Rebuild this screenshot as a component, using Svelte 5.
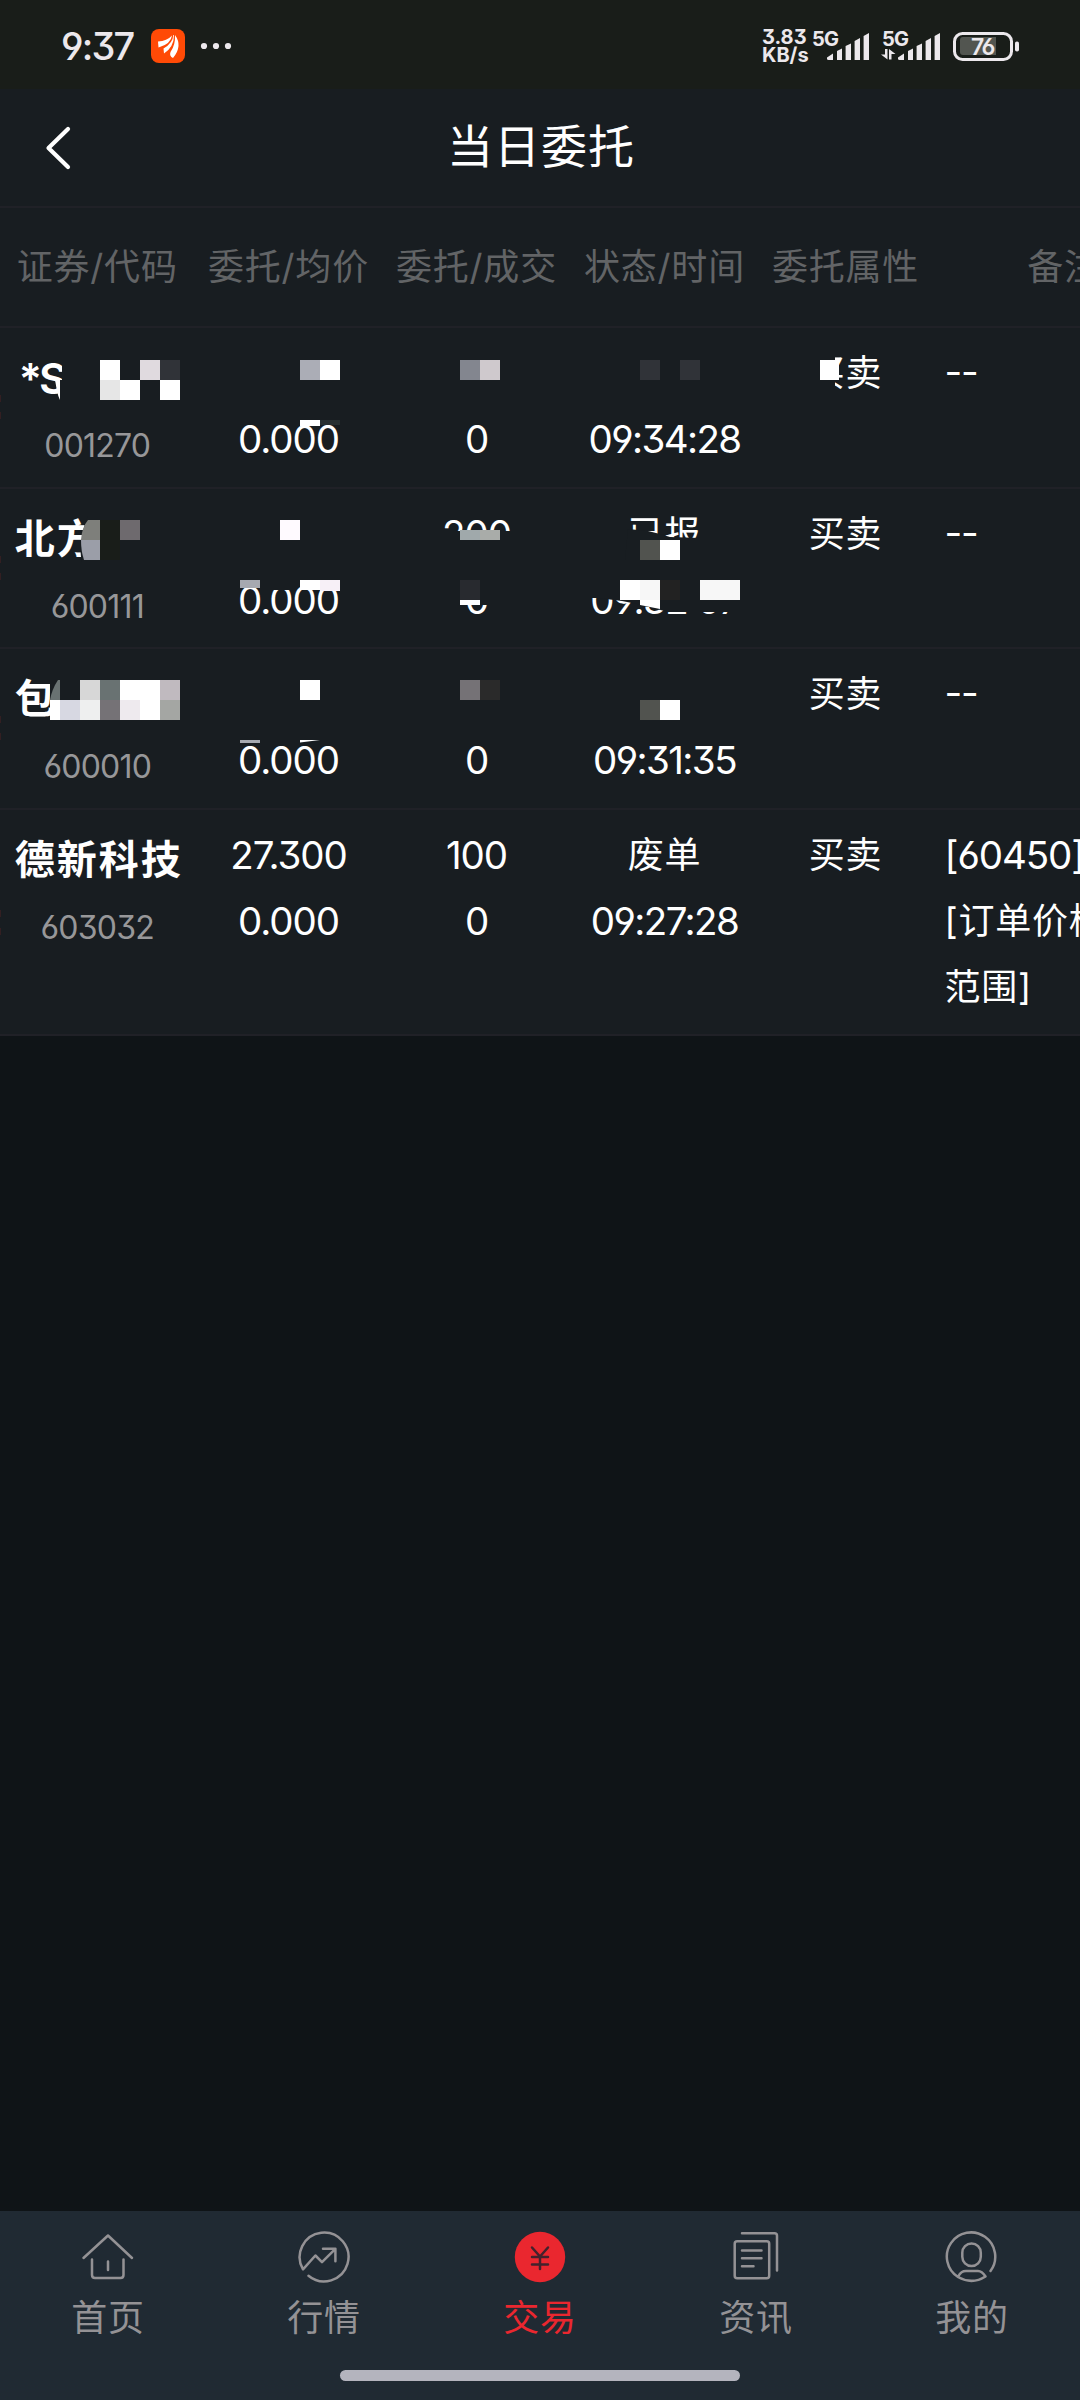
<script lang="ts">
	type Order = {
		name: string;
		code: string;
		price: string[];
		amount: string[];
		status: string;
		time: string;
		remark: string[];
	};

	const columns = ['证券/代码', '委托/均价', '委托/成交', '状态/时间', '委托属性', '备注'];

	const orders: Order[] = [
		{ name: '*S', code: '001270', price: ['', '0.000'], amount: ['', '0'], status: '', time: '09:34:28', remark: ['--'] },
		{ name: '北方', code: '600111', price: ['', '0.000'], amount: ['200', '0'], status: '已报', time: '09:32:07', remark: ['--'] },
		{ name: '包', code: '600010', price: ['', '0.000'], amount: ['', '0'], status: '', time: '09:31:35', remark: ['--'] },
		{
			name: '德新科技',
			code: '603032',
			price: ['27.300', '0.000'],
			amount: ['100', '0'],
			status: '废单',
			time: '09:27:28',
			remark: ['[60450]', '[订单价格', '范围]']
		}
	];

	// redaction blocks: x, y, width, height, colour
	const blocks: [number, number, number, number, string][] = [
		[100, 360, 20, 20, '#fff'],
		[140, 360, 20, 20, '#e0dadf'],
		[160, 360, 20, 20, '#303338'],
		[100, 380, 20, 20, '#e6e6e6'],
		[120, 380, 20, 20, '#fff'],
		[160, 380, 20, 20, '#fff'],
		[300, 360, 20, 20, '#abadb6'],
		[320, 360, 20, 20, '#fff'],
		[460, 360, 20, 20, '#83868f'],
		[480, 360, 20, 20, '#cfc9cd'],
		[640, 360, 20, 20, '#303338'],
		[680, 360, 20, 20, '#303338'],
		[820, 360, 19, 20, '#fff'],
		[300, 420, 20, 6, '#fff'],
		[320, 420, 20, 5, '#283032'],
		[100, 520, 20, 40, '#191d19'],
		[120, 520, 20, 20, '#6e6a6e'],
		[280, 520, 20, 20, '#fffaff'],
		[460, 530, 20, 10, '#a0a9ab'],
		[480, 530, 20, 10, '#a9aca9'],
		[640, 540, 20, 20, '#51534f'],
		[660, 540, 20, 20, '#fff'],
		[240, 580, 20, 8, '#a6a9b0'],
		[300, 580, 20, 10, '#fff'],
		[320, 580, 20, 11, '#f7f0f7'],
		[460, 580, 20, 20, '#282a2f'],
		[460, 600, 20, 5, '#fff'],
		[620, 580, 20, 20, '#fff'],
		[640, 580, 20, 20, '#f7f7f7'],
		[660, 580, 20, 20, '#222'],
		[700, 580, 40, 20, '#f7f7f7'],
		[80, 680, 20, 20, '#d7d7d7'],
		[100, 680, 20, 20, '#697272'],
		[120, 680, 40, 20, '#fff'],
		[160, 680, 20, 20, '#c0babf'],
		[50, 700, 10, 20, '#fff'],
		[60, 700, 20, 20, '#d7d8e2'],
		[80, 700, 20, 20, '#eeefef'],
		[100, 700, 20, 20, '#757276'],
		[120, 700, 20, 20, '#eeeaee'],
		[140, 700, 20, 20, '#fff'],
		[160, 700, 20, 20, '#a4a6a3'],
		[300, 680, 20, 20, '#fff'],
		[460, 680, 20, 20, '#757276'],
		[480, 680, 20, 20, '#2a2a2a'],
		[640, 700, 20, 20, '#51534f'],
		[660, 700, 20, 20, '#fff'],
		[240, 740, 20, 3, '#a6a9b0']
	];

	const edgeMarks = [395, 412, 556, 573, 716, 733, 910, 928];

	const tabs = [
		{ id: 'home', label: '首页' },
		{ id: 'market', label: '行情' },
		{ id: 'trade', label: '交易' },
		{ id: 'news', label: '资讯' },
		{ id: 'mine', label: '我的' }
	];

	let activeTab = $state('trade');
</script>

{#snippet signal()}
	<svg class="signal" width="43" height="28" viewBox="0 0 43 28" fill="#ece8ec">
		<path d="M0 24.5 6 20.5V27H1.5Q0 27 0 25.5Z" />
		<path d="M10 18 15 15.5V27H10Z" />
		<path d="M18.6 13 24 10.5V27H18.6Z" />
		<path d="M27.6 8 33 5V27H27.6Z" />
		<path d="M36.6 3 42 0V27H36.6Z" />
	</svg>
{/snippet}

<div class="screen">
	<div class="status-bar">
		<span class="clock">9:37</span>
		<svg class="app-logo" width="34" height="34" viewBox="0 0 34 34">
			<rect width="34" height="34" rx="8" fill="#ff4a06" />
			<path d="M7 12.500Q16 12 21 6.500 20 15 7.500 18.500z" fill="#fff" />
			<path d="M22.300 6Q22 14 12.500 19.500L13 24.500Q23 18 23 6z" fill="#fff" />
			<path d="M24 6q8 11-2 23-4-2-2.500-6 5-7 4.500-17z" fill="#fff" />
		</svg>
		<svg class="dots" width="32" height="8" viewBox="0 0 32 8" fill="#ece8ec">
			<circle cx="4" cy="4" r="3.100" />
			<circle cx="16" cy="4" r="3.100" />
			<circle cx="28" cy="4" r="3.100" />
		</svg>
		<div class="speed"><span>3.83</span><span>KB/s</span></div>
		<div class="network first"><span>5G</span>{@render signal()}</div>
		<div class="network second">
			<span>5G</span>
			<svg class="arrows" width="15" height="11" viewBox="0 0 15 11" fill="#ece8ec">
				<path d="M4 0h2.500v10.500L0 5.500h4z" />
				<path d="M8 10.500V0l6.500 5h-4v5.500z" />
			</svg>
			{@render signal()}
		</div>
		<div class="battery">
			<svg width="67" height="29" viewBox="0 0 67 29">
				<rect x="1.500" y="1.500" width="57" height="26" rx="8" fill="none" stroke="#ece8ec" stroke-width="3" />
				<path d="M10 5h33v18H10q-3 0-3-3V8q0-3 3-3z" fill="#525550" />
				<rect x="62" y="9.500" width="4" height="10" rx="1.800" fill="#ece8ec" />
			</svg>
			<span>76</span>
		</div>
	</div>

	<header>
		<button class="back" aria-label="返回">
			<svg width="30" height="46" viewBox="0 0 30 46" fill="none" stroke="#fff" stroke-width="4.200" stroke-linecap="round" stroke-linejoin="round">
				<path d="M25 4 5.500 23 25 42" />
			</svg>
		</button>
		<h1>当日委托</h1>
	</header>

	<div class="table">
		<div class="row head">
			{#each columns as column}
				<div class="cell">{column}</div>
			{/each}
		</div>
		{#each orders as order (order.code)}
			<div class="row">
				<div class="cell stock">
					<b class:starred={order.name.startsWith('*')}>{order.name}</b>
					<small>{order.code}</small>
				</div>
				<div class="cell">
					{#each order.price as value}<span class="num">{value}</span>{/each}
				</div>
				<div class="cell">
					{#each order.amount as value}<span class="num">{value}</span>{/each}
				</div>
				<div class="cell">
					<span>{order.status}</span>
					<span class="num time">{order.time}</span>
				</div>
				<div class="cell"><span>买卖</span></div>
				<div class="cell remark">
					{#each order.remark as line, i}
						<span class:num={i === 0} class:none={line === '--'}>{line}</span>
					{/each}
				</div>
			</div>
		{/each}

		<svg class="redaction" width="1080" height="708" viewBox="0 328 1080 708" aria-hidden="true">
			<g fill="#181d21">
				<path d="M60 380h15v22H60zM62 355h13v30H62zM806 350h29v44h-29z" />
				<path d="M88 516h20v46H82q-3-12 0-24 2-14 6-22z" />
				<path d="M440 531h80v24h-80zM460 580h32v25h-32z" />
				<path d="M628 529l20 2 12 3 10 3 30 1v22h-75z" />
				<path d="M588 582h156v30h-42v4h-14v-4h-20l-26-7-20-4-24-3h-10z" />
				<path d="M270 585h20v5h-20zM50 676h20v44H50z" />
			</g>
			{#each blocks as [x, y, width, height, fill]}
				<rect {x} {y} {width} {height} {fill} shape-rendering="crispEdges" />
			{/each}
			<path d="M55 380h5v20q-2-4-3-9z" fill="#fff" />
			<path d="M88 520h12v20H81q1-13 7-20z" fill="#7e7f7b" />
			<path d="M81 540h19v20H84q-3-9-3-20z" fill="#9b9ea8" />
			<path d="M640 600h20v9l-20-4z" fill="#fff" />
			<path d="M58 680h2v20H50q2-11 8-20z" fill="#697272" />
			<path d="M300 740h20l-20 2.500z" fill="#fff" />
			{#each edgeMarks as y}
				<rect x="0" {y} width="1" height="7" fill="#331f22" />
			{/each}
		</svg>
	</div>

	<nav>
		<div class="tabs">
			{#each tabs as tab (tab.id)}
				<button class:active={activeTab === tab.id} onclick={() => (activeTab = tab.id)}>
					<svg width="56" height="56" viewBox="0 0 56 56" fill="none" stroke="currentColor" stroke-width="2.500" stroke-linecap="round" stroke-linejoin="round">
						{#if tab.id === 'home'}
							<path d="M3.500 29 28 6.500 52 29" />
							<path d="M12 30.500V46q0 3 3 3h25.500q3 0 3-3V30.500M28 32.500v8.500" />
						{:else if tab.id === 'market'}
							<path d="M12.500 46.800A24.400 24.400 0 1 0 7 40.300L19.400 26.500 26 33.200 39.400 19.800M27 19.800H39.400V32.200" />
						{:else if tab.id === 'trade'}
							<circle cx="28" cy="28" r="25.200" fill="currentColor" stroke="none" />
							<path d="M20 18.500 28 27.500 36 18.500M28 27.500V40M20 28H36M20 35.500H36" stroke="#43222c" />
						{:else if tab.id === 'news'}
							<rect x="6.700" y="12.300" width="34.500" height="37" rx="2.500" />
							<path d="M14 4.300H46.500q2.500 0 2.500 2.500V41.500M14 21.500H33.500M14 29.200H33.500M14 37.200H25.500" />
						{:else}
							<path d="M46.500 42A24.200 24.200 0 1 0 14 48M14 48Q28 56 41.500 47.500M14.500 47Q17 42 22 42H34Q38 42 41.500 47.500" />
							<rect x="18.300" y="14.500" width="18.500" height="22.500" rx="9.250" />
						{/if}
					</svg>
					<span>{tab.label}</span>
				</button>
			{/each}
		</div>
		<div class="home-indicator"></div>
	</nav>
</div>

<style>
	:global(body) {
		background: #0f1417;
	}

	.screen {
		width: 1080px;
		height: 2400px;
		display: flex;
		flex-direction: column;
		overflow: hidden;
		background: #0f1417;
		color: #fff;
		font-family: Inter, 'Noto Sans CJK SC', sans-serif;
		font-feature-settings: 'cv03', 'cv04', 'cv09';
	}

	button {
		padding: 0;
		border: none;
		background: none;
		font: inherit;
		color: inherit;
	}

	svg {
		display: block;
		flex-shrink: 0;
	}

	.status-bar {
		display: flex;
		align-items: center;
		height: 89px;
		padding: 3px 60px 0 61px;
		box-sizing: border-box;
		background: #191d19;
		color: #ece8ec;
	}

	.clock {
		width: 90px;
		font-size: 38px;
		font-weight: 500;
		letter-spacing: -1.8px;
	}

	.dots {
		margin-left: 15px;
	}

	.speed {
		display: flex;
		flex-direction: column;
		width: 51px;
		margin-left: auto;
		font-size: 20px;
		line-height: 18.5px;
		font-weight: 700;
		white-space: nowrap;
	}

	.network {
		position: relative;
		display: flex;
		align-items: flex-end;
		height: 30px;
	}

	.network span {
		position: absolute;
		left: -1px;
		top: -2px;
		font-size: 20px;
		line-height: 20px;
		font-weight: 700;
		letter-spacing: -0.8px;
	}

	.network .signal {
		margin-left: 14px;
	}

	.network.second {
		margin-left: 13px;
	}

	.network .arrows {
		margin: 0 2px 1px -2px;
	}

	.network.second .signal {
		margin-left: 0;
	}

	.battery {
		position: relative;
		margin-left: 12px;
	}

	.battery span {
		position: absolute;
		left: 18px;
		top: 1px;
		font-size: 23px;
		line-height: 28px;
		font-weight: 600;
		letter-spacing: -1.5px;
	}

	header {
		display: grid;
		grid-template-columns: 120px 1fr 120px;
		align-items: center;
		height: 119px;
		box-sizing: border-box;
		border-bottom: 2px solid #202127;
		background: #181d21;
	}

	.back {
		padding-left: 43px;
	}

	h1 {
		margin: 0;
		padding: 0 0 9px 2px;
		font-size: 46px;
		font-weight: 400;
		letter-spacing: 1px;
		text-align: center;
	}

	.table {
		position: relative;
		background: #181d21;
	}

	.row {
		display: grid;
		grid-template-columns: 194.5px 188px 188px 188px 174px 263px;
		min-height: 160.5px;
		padding: 12px 0 14px;
		box-sizing: border-box;
		border-bottom: 2px solid #202127;
	}

	.row.head {
		min-height: 120px;
		padding: 0 0 1px;
		align-items: center;
		color: #626466;
	}

	.cell {
		display: flex;
		flex-direction: column;
		align-items: center;
		font-size: 36px;
		line-height: 66px;
		letter-spacing: 0.8px;
		white-space: nowrap;
	}

	.cell span {
		height: 66px;
	}

	.cell .num {
		font-size: 38.5px;
		line-height: 67px;
		letter-spacing: -1.1px;
	}

	.cell .time {
		letter-spacing: -1.6px;
	}

	.cell .none {
		line-height: 63px;
	}

	.stock b {
		width: 165px;
		height: 66px;
		padding-top: 5px;
		font-size: 40px;
		letter-spacing: 2px;
	}

	.stock b.starred {
		width: 161px;
		padding-left: 4px;
		font-size: 43px;
		font-weight: 600;
		letter-spacing: -3px;
	}

	/* the code line hangs past its box so it does not stretch the row */
	.stock small {
		height: 61px;
		line-height: 70px;
		color: #979799;
		font-size: 32px;
		letter-spacing: -0.8px;
	}

	.row:not(.head) .stock {
		height: 132px;
	}

	.remark {
		align-items: flex-start;
	}

	.remark span {
		padding-left: 12px;
	}

	.redaction {
		position: absolute;
		left: 0;
		top: 120px;
	}

	nav {
		display: flex;
		flex-direction: column;
		align-items: center;
		height: 189px;
		margin-top: auto;
		background: #202a33;
	}

	.tabs {
		display: grid;
		grid-template-columns: repeat(5, 1fr);
		width: 100%;
		height: 159px;
	}

	.tabs button {
		display: flex;
		flex-direction: column;
		align-items: center;
		padding-top: 17.5px;
		color: #949295;
		font-size: 36px;
		line-height: 66px;
		letter-spacing: 0.8px;
	}

	.tabs button.active {
		color: #ea272f;
	}

	.home-indicator {
		width: 400px;
		height: 11px;
		border-radius: 6px;
		background: #b4b4be;
	}
</style>
